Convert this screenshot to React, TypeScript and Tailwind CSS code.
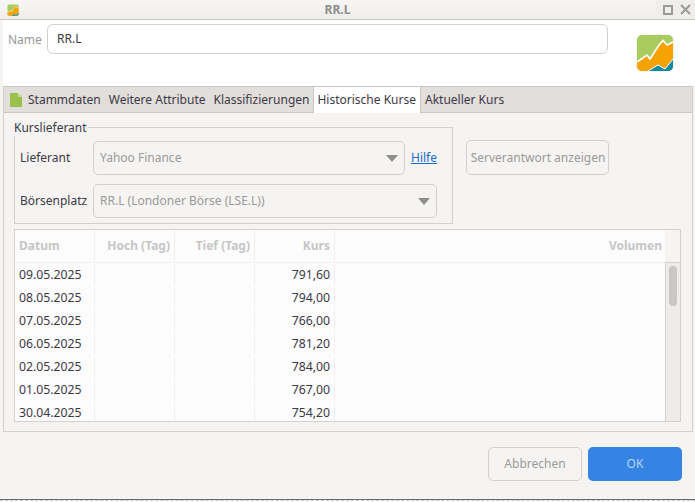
const rows = [
  ['09.05.2025', '791,60'],
  ['08.05.2025', '794,00'],
  ['07.05.2025', '766,00'],
  ['06.05.2025', '781,20'],
  ['02.05.2025', '784,00'],
  ['01.05.2025', '767,00'],
  ['30.04.2025', '754,20'],
];

function AppLogo({ size, clipId }: { size: number; clipId: string }) {
  return (
    <svg width={size} height={size} viewBox="-1 -1 38 38">
      <clipPath id={clipId}>
        <rect x="0" y="0" width="36" height="36" rx="5" />
      </clipPath>
      <rect x="-1" y="-1" width="38" height="38" rx="6" fill="#f4f4f2" />
      <g clipPath={`url(#${clipId})`}>
        <rect x="0" y="0" width="36" height="36" fill="#a9cb5f" />
        <path d="M0 27l10-7 3 4 9-14 4-4.500 4 4.500 6-3v30H0z" fill="#f6a200" />
        <path d="M11 36l10-6 7 4 8-10v12z" fill="#0f8aa3" />
        <path d="M11 36l10-6 7 4 8-10" fill="none" stroke="#ffffff" strokeWidth="1" />
        <path d="M0 27l10-7 3 4 9-14 4-4.500 4 4.500 6-3" fill="none" stroke="#ffffff" strokeWidth="1.600" />
      </g>
    </svg>
  );
}

function Combo({ label, className }: { label: string; className: string }) {
  return (
    <div className={`h-[34px] flex items-center justify-between rounded-[5px] border border-[#d5d0cc] pl-[6px] pr-[6px] text-[#9a9a98] ${className}`}>
      <span>{label}</span>
      <span className="w-0 h-0 border-l-[6px] border-r-[6px] border-t-[7px] border-l-transparent border-r-transparent border-t-[#8f8f8d]" />
    </div>
  );
}

export default function App() {
  return (
    <div className="w-[695px] h-[502px] overflow-hidden flex flex-col bg-[#f5f4f2] text-[12px] text-[#3d3846] font-['Noto_Sans','Open_Sans',sans-serif]">
      <div className="h-[20px] shrink-0 flex items-center justify-between border-b border-[#cdc7c2] bg-gradient-to-b from-[#f7f6f5] to-[#efeeec] pl-[7px]">
        <AppLogo size={12} clipId="logo-small" />
        <span className="font-bold text-[#8f8f8d]">RR.L</span>
        <div className="h-full w-[39px] flex items-center justify-end gap-[7px] pr-[4px] bg-[#efeeec]">
          <span className="w-[10px] h-[10px] border-2 border-[#9a9a98]" />
          <svg width="11" height="11" viewBox="0 0 11 11" stroke="#9a9a98" strokeWidth="2" fill="none">
            <path d="M1 1l9 9M10 1l-9 9" />
          </svg>
        </div>
      </div>

      <div className="h-[66px] shrink-0 ml-[3px] bg-white flex pl-[5px] pr-[21px] pt-[4px] items-start">
        <span className="text-[#979796] mt-[7px] w-[39px]">Name</span>
        <div className="flex-1 h-[30px] rounded-[6px] border border-[#d5d0cc] flex items-center pl-[9px] text-[#3d3846]">RR.L</div>
        <div className="ml-[28px] mt-[10px]">
          <AppLogo size={38} clipId="logo-large" />
        </div>
      </div>

      <div className="ml-[3px] mr-[2px] h-[346px] shrink-0 flex flex-col border border-t-0 border-[#d5d0cc]">
        <div className="h-[27px] shrink-0 flex items-stretch bg-[#e1dedb] border-y border-[#cdc7c2]">
          <div className="flex items-center pl-[6px] pr-[3px] gap-[6px]">
            <svg width="12" height="14" viewBox="0 0 12 14">
              <path d="M0 0h8l4 4v10H0z" fill="#9ac14d" />
              <path d="M8 0l4 4H8z" fill="#c6dd92" />
            </svg>
            <span>Stammdaten</span>
          </div>
          <div className="flex items-center pl-[5px] pr-[4px]">Weitere Attribute</div>
          <div className="flex items-center pl-[4px] pr-[4px] border-r border-[#cdc7c2]">Klassifizierungen</div>
          <div className="flex items-center pl-[3px] pr-[4px] bg-white -mb-px border-r border-[#cdc7c2]">Historische Kurse</div>
          <div className="flex items-center px-[4px]">Aktueller Kurs</div>
        </div>

        <div className="flex-1 min-h-0 flex flex-col pl-[10px] pr-[11px] pt-[14px]">
          <div className="flex items-start">
            <div className="relative w-[439px] h-[97px] border border-[#d5d0cc] pl-[5px] pr-[15px] pt-[13px]">
              <span className="absolute -top-[9px] -left-px bg-[#f5f4f2] pr-px leading-[17px]">Kurslieferant</span>
              <div className="flex items-center">
                <span className="w-[73px]">Lieferant</span>
                <Combo label="Yahoo Finance" className="w-[312px]" />
                <span className="ml-[6px] text-[#1b6acb] underline">Hilfe</span>
              </div>
              <div className="flex items-center mt-[9px]">
                <span className="w-[73px]">Börsenplatz</span>
                <Combo label="RR.L (Londoner Börse (LSE.L))" className="w-[344px]" />
              </div>
            </div>
            <div className="ml-[13px] mt-[13px] h-[35px] w-[143px] rounded-[5px] border border-[#d5d0cc] flex items-center justify-center pl-px text-[#9a9a98]">
              Serverantwort anzeigen
            </div>
          </div>

          <div className="mt-[5px] h-[193px] shrink-0 border border-[#d5d0cc] bg-[#fcfcfc] flex overflow-hidden">
            <div className="flex-1 min-w-0">
              <div className="h-[33px] flex items-center font-bold text-[#c6c6c5] border-b border-[#f0efed]">
                <div className="w-[80px] h-full flex items-center pl-[4px] border-r border-[#f0efed]">Datum</div>
                <div className="w-[80px] h-full flex items-center justify-end pr-[4px] border-r border-[#f0efed]">Hoch (Tag)</div>
                <div className="w-[80px] h-full flex items-center justify-end pr-[4px] border-r border-[#f0efed]">Tief (Tag)</div>
                <div className="w-[80px] h-full flex items-center justify-end pr-[4px] border-r border-[#f0efed]">Kurs</div>
                <div className="flex-1 h-full flex items-center justify-end pr-[3px]">Volumen</div>
              </div>
              {rows.map((row) => (
                <div key={row[0]} className="h-[23px] flex items-center text-[12.25px] pt-[2px]">
                  <div className="w-[80px] h-full flex items-center pl-[4px] border-r border-[#f0efed]">{row[0]}</div>
                  <div className="w-[80px] h-full border-r border-[#f0efed]" />
                  <div className="w-[80px] h-full border-r border-[#f0efed]" />
                  <div className="w-[80px] h-full flex items-center justify-end pr-[4px] border-r border-[#f0efed]">{row[1]}</div>
                </div>
              ))}
            </div>
            <div className="w-[15px] shrink-0 flex flex-col bg-[#f5f4f2]">
              <div className="h-[32px] shrink-0" />
              <div className="flex-1 bg-[#edecea] border-l border-t border-[#d5d0cc] pl-[3px] pt-[3px]">
                <div className="w-[8px] h-[40px] rounded-full bg-[#c9c8c6]" />
              </div>
            </div>
          </div>
        </div>
      </div>

      <div className="flex-1 min-h-0 flex justify-end gap-[6px] pr-[13px] pt-[15px]">
        <div className="w-[94px] h-[34px] rounded-[5px] border border-[#d5d0cc] flex items-center justify-center text-[#9a9a98]">Abbrechen</div>
        <div className="w-[94px] h-[34px] rounded-[5px] bg-[#3584e4] flex items-center justify-center text-[#b9d3f4]">OK</div>
      </div>
      <div className="h-[3px] shrink-0 border-t border-[#6b6b6b] bg-white">
        <div className="border-t border-dashed border-[#c8c8c8]" />
      </div>
    </div>
  );
}
